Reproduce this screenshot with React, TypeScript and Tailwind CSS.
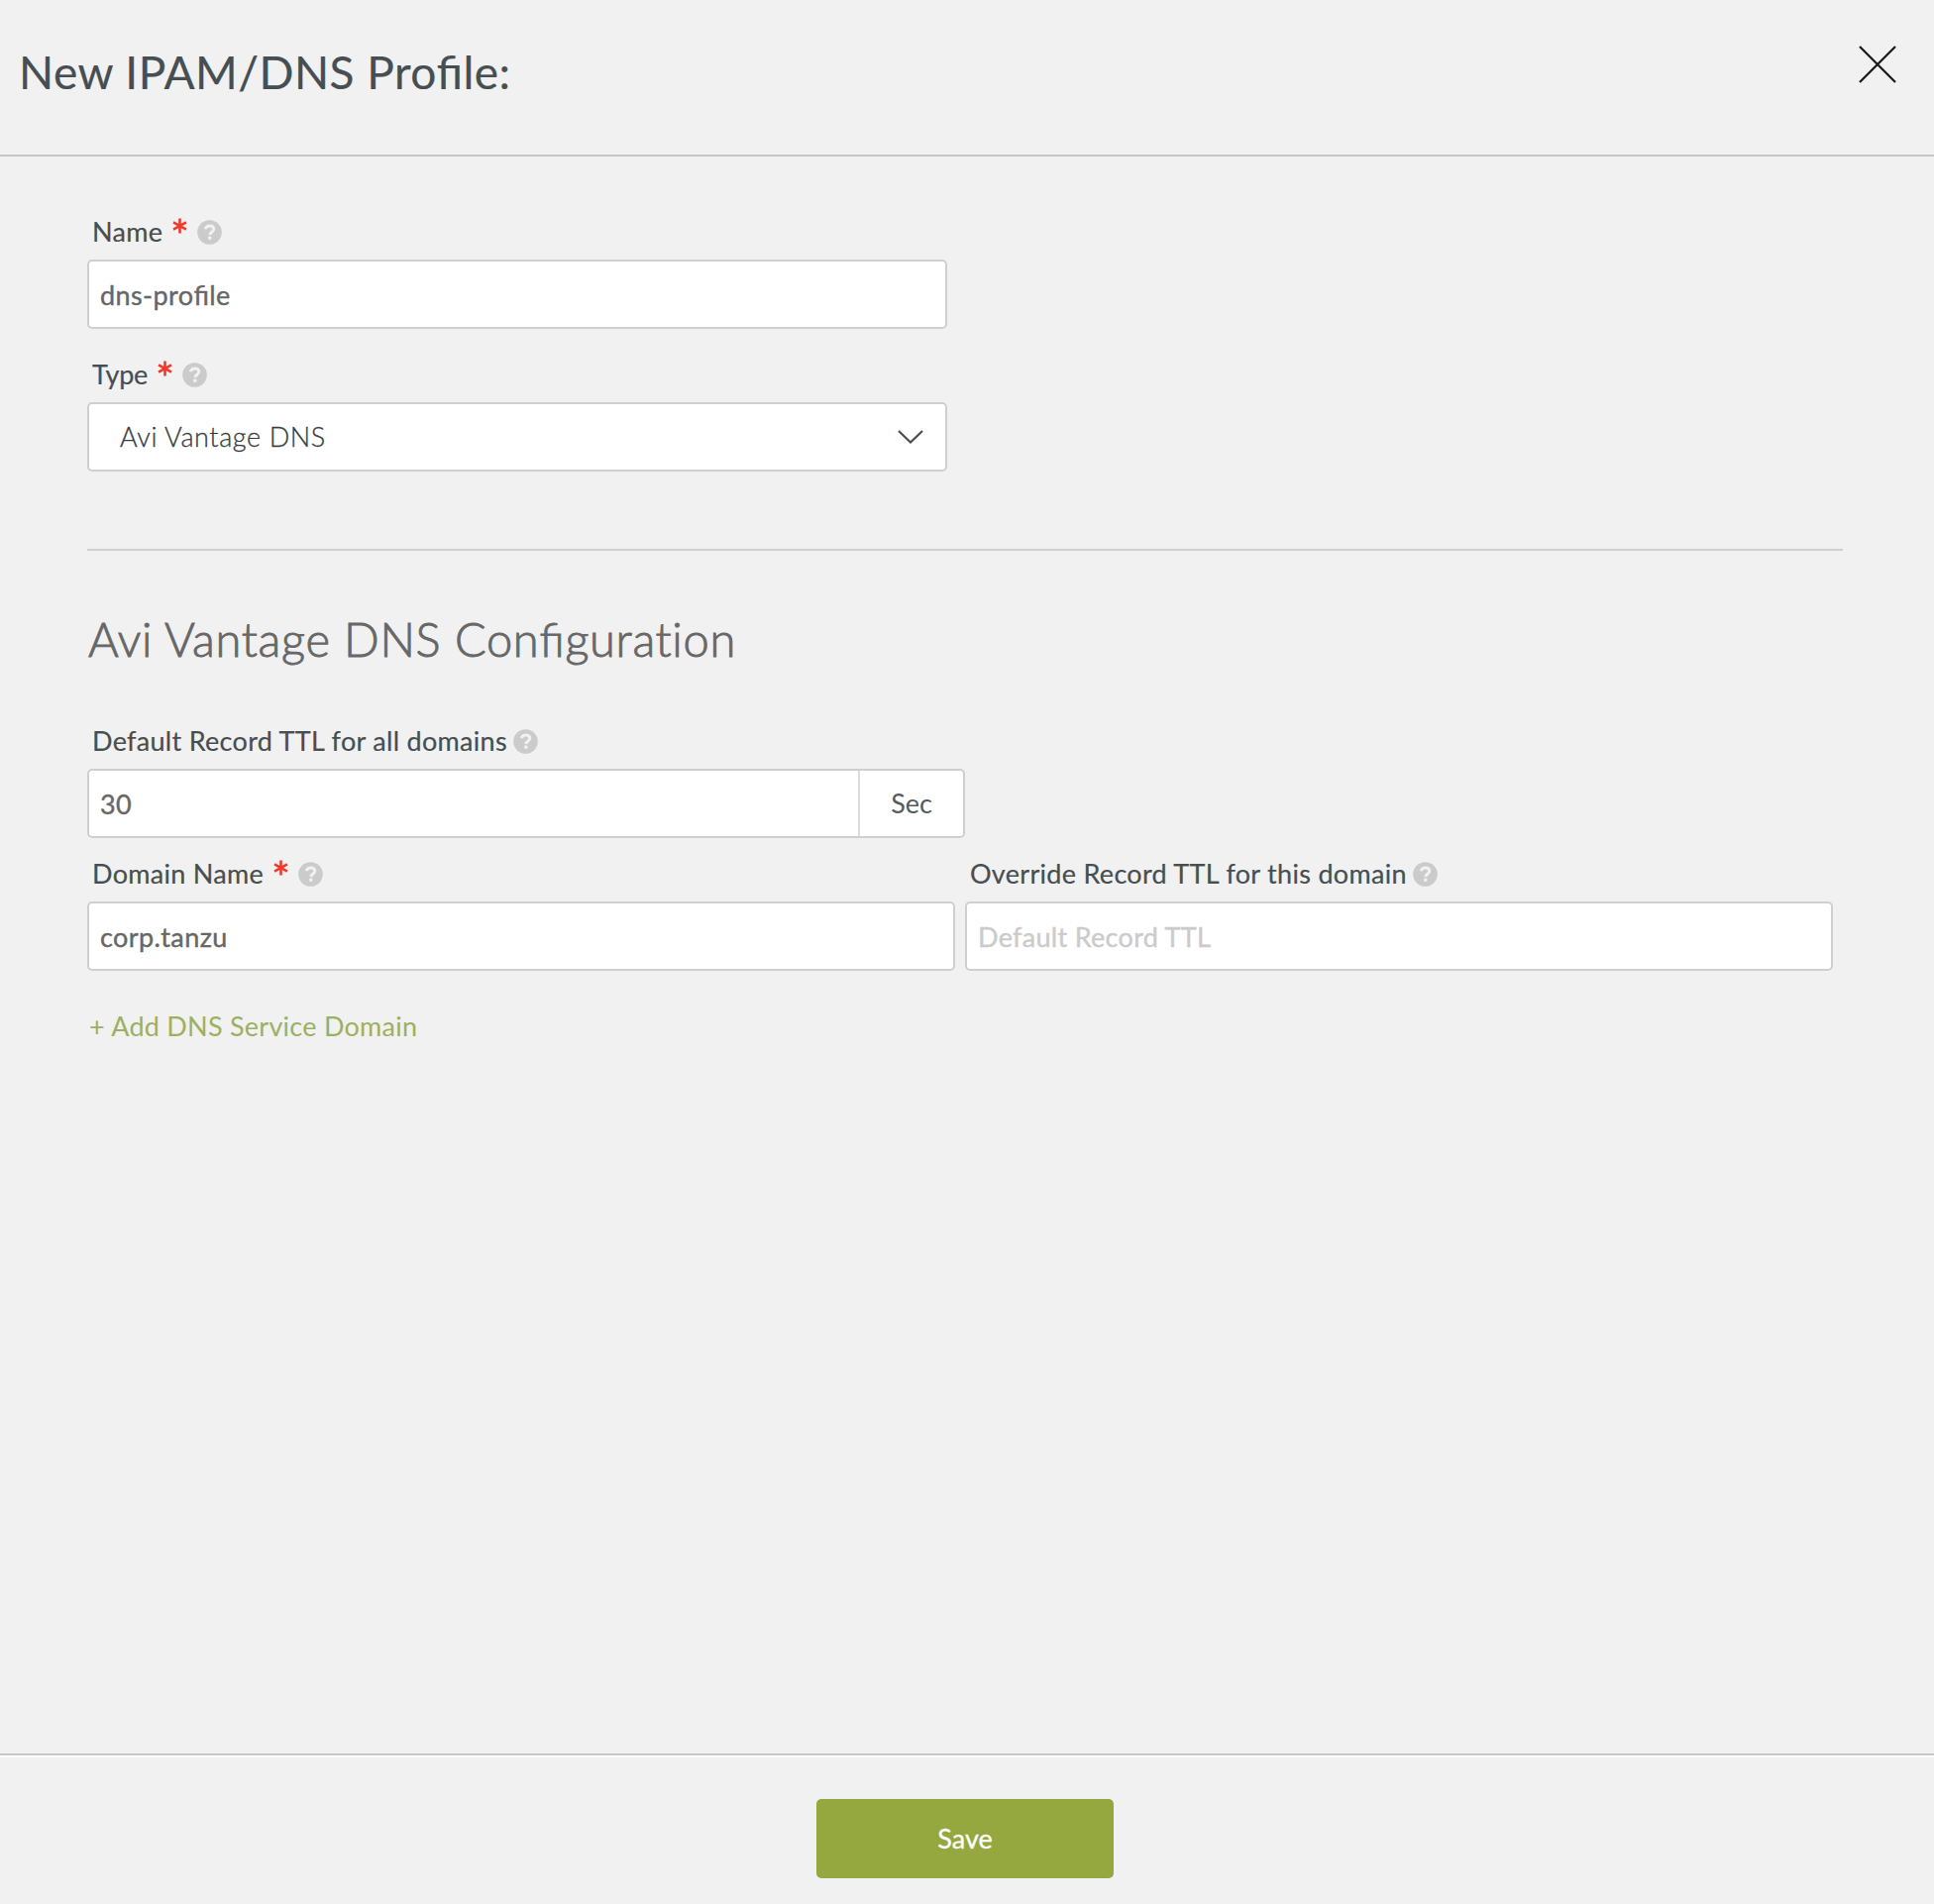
import type { ReactNode } from "react";

function Help({ className = "" }: { className?: string }) {
  return (
    <svg className={`size-[25px] shrink-0 ${className}`} viewBox="0 0 25 25">
      <circle cx="12.5" cy="12.5" r="12.3" fill="#cbcbcb" />
      <path
        d="M8.300 9.300C8.800 7 10.400 5.900 12.700 5.900c2.400 0 4.100 1.300 4.100 3.400 0 3-3.700 2.900-4 5.700"
        fill="none"
        stroke="#f1f1f1"
        strokeWidth="3"
      />
      <rect x="11.200" y="16.600" width="3.200" height="3.200" fill="#f1f1f1" />
    </svg>
  );
}

function Star() {
  return (
    <svg className="mb-3 ml-[10px] mr-[10px] h-4 w-[15px] shrink-0" viewBox="0 0 15 16">
      <path d="M7.500 0.500V15.500M1 4.300l13 7.400M14 4.300L1 11.700" stroke="#ef3a2b" strokeWidth="2.600" />
    </svg>
  );
}

function Label({ children, required }: { children: ReactNode; required?: boolean }) {
  return (
    <div className="mb-[11px] flex h-[34px] items-center pl-[5px] text-[27px] leading-[34px] tracking-[0.300px] text-[#474e52] [-webkit-text-stroke:0.200px_#474e52]">
      <span>{children}</span>
      {required ? <><Star /><Help /></> : <Help className="ml-[6px]" />}
    </div>
  );
}

const box =
  "flex h-[70px] items-center rounded-[5px] border-2 border-[#cfcfcf] bg-white text-[27px] leading-[34px] text-[#676767]";
const value = "pt-[2px] pl-[11px] [-webkit-text-stroke:0.400px]";

function Fi() {
  return <span className="[font-feature-settings:'liga'_1]">fi</span>;
}

export default function App() {
  return (
    <div className="flex h-[1922px] w-[1952px] flex-col bg-[#f1f1f1] font-[Lato,sans-serif]">
      <header className="flex h-[158px] justify-between border-b-2 border-[#c6c6c6] pl-[19px] pr-[37px]">
        <h1 className="pt-[43px] text-[46px] leading-[60px] tracking-[0.470px] text-[#474e52] [-webkit-text-stroke:0.200px_#474e52]">
          New IPAM/DNS Pro<Fi />le:
        </h1>
        <svg className="mt-[45px] size-[40px]" viewBox="0 0 40 40">
          <path d="M2 2L38 38M38 2L2 38" stroke="#1c1c1c" strokeWidth="2.300" />
        </svg>
      </header>

      <main className="flex-1 pl-[88px] pt-[59px]">
        <section className="w-[868px]">
          <Label required>Name</Label>
          <div className={box}>
            <span className={`${value} tracking-[0.400px]`}>dns-pro<Fi />le</span>
          </div>
          <div className="mt-[29px]">
            <Label required><span className="tracking-[-0.200px]">Type</span></Label>
          </div>
          <div className={`${box} justify-between pl-[31px] pr-[21px]`}>
            <span className="font-light tracking-[0.600px] text-[#383d40] [-webkit-text-stroke:0.300px]">Avi Vantage DNS</span>
            <svg className="mb-px h-4 w-[28px]" viewBox="0 0 28 16">
              <path d="M2 2L14 13.500L26 2" fill="none" stroke="#474e52" strokeWidth="2.200" />
            </svg>
          </div>
        </section>

        <hr className="mt-[78px] w-[1772px] border-t-2 border-[#cfcfcf]" />

        <h2 className="mb-[56px] mt-[59px] pl-px text-[47px] font-light leading-[60px] tracking-[0.690px] text-[#676767] [-webkit-text-stroke:0.900px_#676767]">
          Avi Vantage DNS Con<Fi />guration
        </h2>

        <Label>Default Record TTL for all domains</Label>
        <div className={`${box} w-[886px]`}>
          <span className={`${value} flex-1 tracking-[0.400px]`}>30</span>
          <span className="flex h-full w-[106px] items-center justify-center border-l-2 border-[#dcdcdc] text-[#555b5e]">Sec</span>
        </div>

        <div className="mt-[19px] flex gap-[10px]">
          <div className="w-[876px]">
            <Label required>Domain Name</Label>
            <div className={box}>
              <span className={`${value} tracking-[0.400px]`}>corp.tanzu</span>
            </div>
          </div>
          <div className="w-[876px]">
            <Label>Override Record TTL for this domain</Label>
            <div className={box}>
              <span className={`${value} tracking-[0.300px] text-[#cbcbcb]`}>Default Record TTL</span>
            </div>
          </div>
        </div>

        <a className="mt-[39px] block pl-[2px] text-[27px] leading-[34px] tracking-[0.250px] text-[#9cb063]">+ Add DNS Service Domain</a>
      </main>

      <footer className="flex h-[152px] justify-center border-t-2 border-[#c6c6c6] pr-1 shadow-[inset_0_2px_0_#ffffff]">
        <button className="mt-[44px] h-[80px] w-[300px] rounded-[5px] bg-[#95a83f] text-[27px] text-white [-webkit-text-stroke:0.300px]">Save</button>
      </footer>
    </div>
  );
}
